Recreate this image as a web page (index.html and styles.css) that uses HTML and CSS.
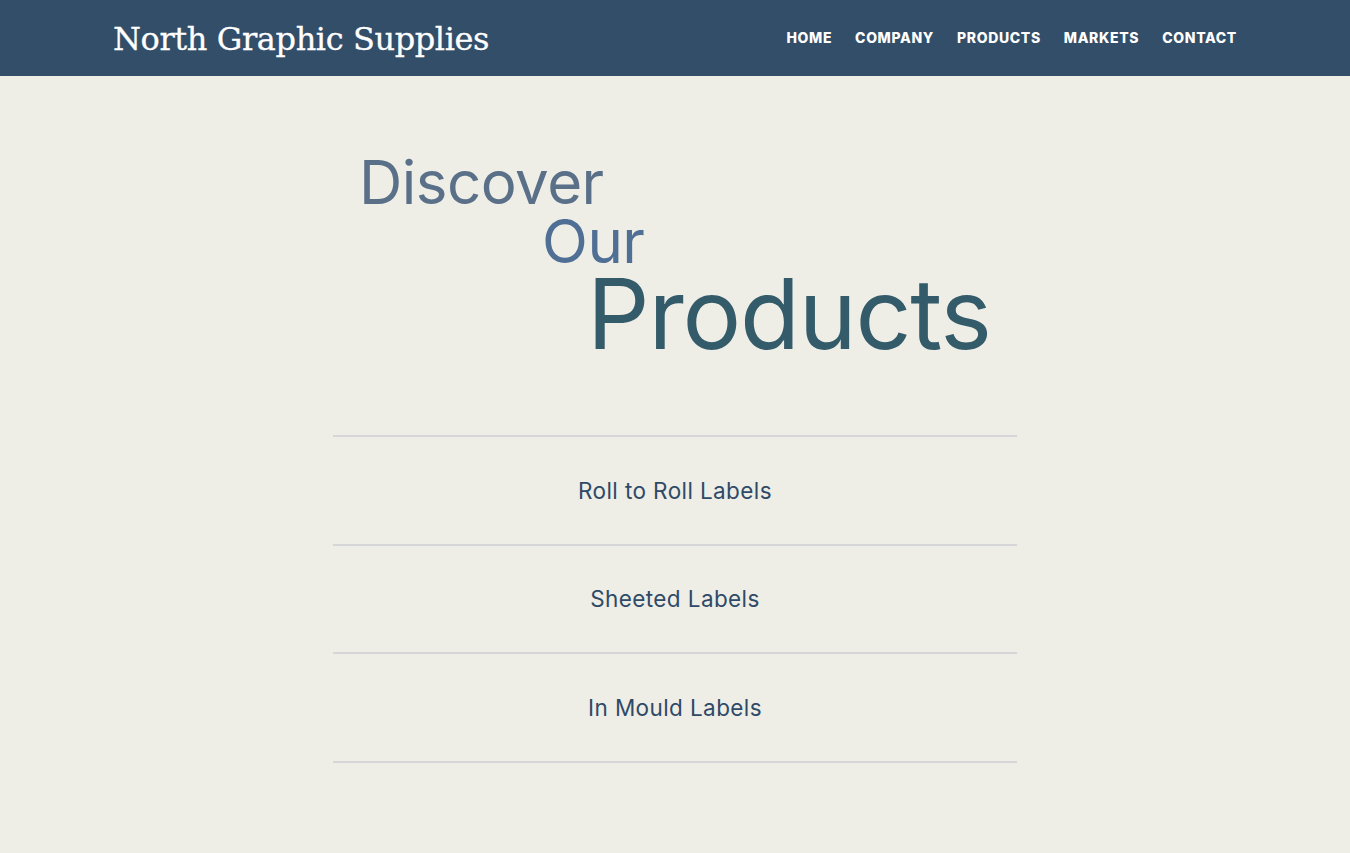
FILE: index.html
```html
<!DOCTYPE html>
<html lang="en">
<head>
<meta charset="utf-8">
<title>North Graphic Supplies</title>
<link rel="stylesheet" href="styles.css">
</head>
<body>
<header class="site-header">
  <div class="header-inner">
    <a class="brand" href="#">North Graphic Supplies</a>
    <nav class="main-nav">
      <a href="#">HOME</a>
      <a href="#">COMPANY</a>
      <a href="#">PRODUCTS</a>
      <a href="#">MARKETS</a>
      <a href="#">CONTACT</a>
    </nav>
  </div>
</header>
<main class="content">
  <h1 class="hero-title">
    <span class="line-discover">Discover</span>
    <span class="line-our">Our</span>
    <span class="line-products">Products</span>
  </h1>
  <ul class="product-list">
    <li><a href="#">Roll to Roll Labels</a></li>
    <li><a href="#">Sheeted Labels</a></li>
    <li><a href="#">In Mould Labels</a></li>
  </ul>
</main>
</body>
</html>
```

FILE: styles.css
```css
* { box-sizing: border-box; }
html, body { margin: 0; padding: 0; }
body {
  background: #eeede6;
  font-family: "Inter", "Noto Sans", sans-serif;
  min-height: 853px;
}
a { text-decoration: none; color: inherit; }

.site-header {
  background: #324e69;
  height: 76px;
}
.header-inner {
  width: 1124px;
  margin: 0 auto;
  height: 100%;
  display: flex;
  align-items: center;
  justify-content: space-between;
}
.brand {
  color: #ffffff;
  font-family: "DejaVu Serif", "Liberation Serif", serif;
  font-size: 32px;
  letter-spacing: -0.4px;
  line-height: 1;
  padding-top: 1px;
  -webkit-text-stroke: 0.3px #ffffff;
}
.main-nav {
  display: flex;
  gap: 23px;
  padding-bottom: 2px;
}
.main-nav a {
  color: #ffffff;
  font-family: "Inter", sans-serif;
  font-weight: 800;
  font-size: 14px;
  letter-spacing: 0.65px;
}

.content {
  width: 684px;
  margin: 0 auto;
}
.hero-title {
  margin: 0;
  padding-top: 74px;
  font-weight: 400;
  display: flex;
  flex-direction: column;
  align-items: flex-start;
}
.hero-title span { display: block; white-space: nowrap; }
.line-discover {
  margin-left: 26px;
  font-size: 60px;
  line-height: 64px;
  color: #5a7089;
  letter-spacing: -0.5px;
}
.line-our {
  margin-left: 209px;
  font-size: 60px;
  line-height: 54px;
  color: #4f6f94;
  letter-spacing: -0.5px;
}
.line-products {
  margin-left: 254px;
  font-size: 98px;
  line-height: 92px;
  color: #345b6a;
  letter-spacing: -1.2px;
}

.product-list {
  list-style: none;
  margin: 75px 0 0;
  padding: 0;
  border-bottom: 2px solid #d6d6d9;
}
.product-list li {
  border-top: 2px solid #d6d6d9;
  height: 108.5px;
  display: flex;
  align-items: center;
  justify-content: center;
}
.product-list a {
  color: #2f4a66;
  font-size: 22.5px;
  font-weight: 400;
  letter-spacing: 0.4px;
}
```
